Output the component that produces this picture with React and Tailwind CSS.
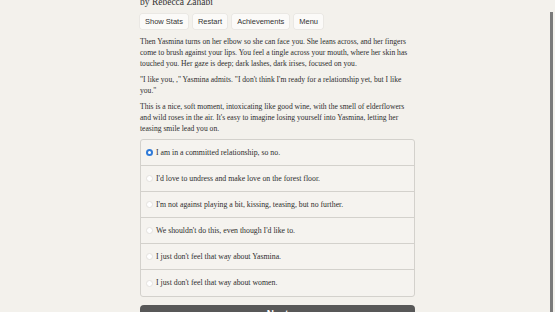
const CHOICES = [
  'I am in a committed relationship, so no.',
  "I'd love to undress and make love on the forest floor.",
  "I'm not against playing a bit, kissing, teasing, but no further.",
  "We shouldn't do this, even though I'd like to.",
  "I just don't feel that way about Yasmina.",
  "I just don't feel that way about women.",
]

const BUTTONS = ['Show Stats', 'Restart', 'Achievements', 'Menu']

function Radio({ checked }) {
  if (checked) {
    return (
      <span className="w-[7px] h-[7px] rounded-full bg-[#2f7ad8] flex items-center justify-center shrink-0">
        <span className="w-[3px] h-[3px] rounded-full bg-white" />
      </span>
    )
  }
  return <span className="w-[7px] h-[7px] rounded-full bg-white border border-[#e4e2de] shrink-0" />
}

export default function App() {
  return (
    <div className="relative w-[555px] h-[312px] overflow-hidden bg-[#f3f1ec] text-[#2e2e2e] font-['Liberation_Serif',serif]">
      <div className="w-[275px] ml-[140px] -mt-[4px]">
        <p className="text-[9.5px] leading-[13px] text-[#333]">by Rebecca Zahabi</p>

        <div className="flex gap-[5px] mt-[5px] font-['Liberation_Sans',sans-serif]">
          {BUTTONS.map(b => (
            <span key={b} className="px-[5px] h-[15px] flex items-center bg-[#fbfaf8] rounded-[2px] text-[7.5px] text-[#333] shadow-[0_0_0_0.5px_#e2e0db]">
              {b}
            </span>
          ))}
        </div>

        <div className="mt-[7px] text-[7.6px] leading-[11px] space-y-[5px]">
          <p>
            Then Yasmina turns on her elbow so she can face you. She leans across, and her fingers come to brush against your lips. You feel a tingle across your mouth, where her skin has touched you. Her gaze is deep; dark lashes, dark irises, focused on you.
          </p>
          <p>
            "I like you, ," Yasmina admits. "I don't think I'm ready for a relationship yet, but I like you."
          </p>
          <p>
            This is a nice, soft moment, intoxicating like good wine, with the smell of elderflowers and wild roses in the air. It's easy to imagine losing yourself into Yasmina, letting her teasing smile lead you on.
          </p>
        </div>

        <div className="mt-[5px] border border-[#d3d1cc] rounded-[3px] bg-[#f5f3ef] divide-y divide-[#d3d1cc]">
          {CHOICES.map((c, i) => (
            <div key={i} className="h-[26px] flex items-center gap-[3px] pl-[5px] text-[7.8px]">
              <Radio checked={i === 0} />
              <span>{c}</span>
            </div>
          ))}
        </div>

        <div className="mt-[8px] h-[24px] rounded-[4px] bg-[#585858] flex justify-center pt-[2px] text-white font-['Liberation_Sans',sans-serif] font-bold text-[10px]">
          Next
        </div>
      </div>

      <div className="absolute left-[550px] top-[12px] w-[3px] h-[310px] bg-[#7a7a7a]" />
    </div>
  )
}
